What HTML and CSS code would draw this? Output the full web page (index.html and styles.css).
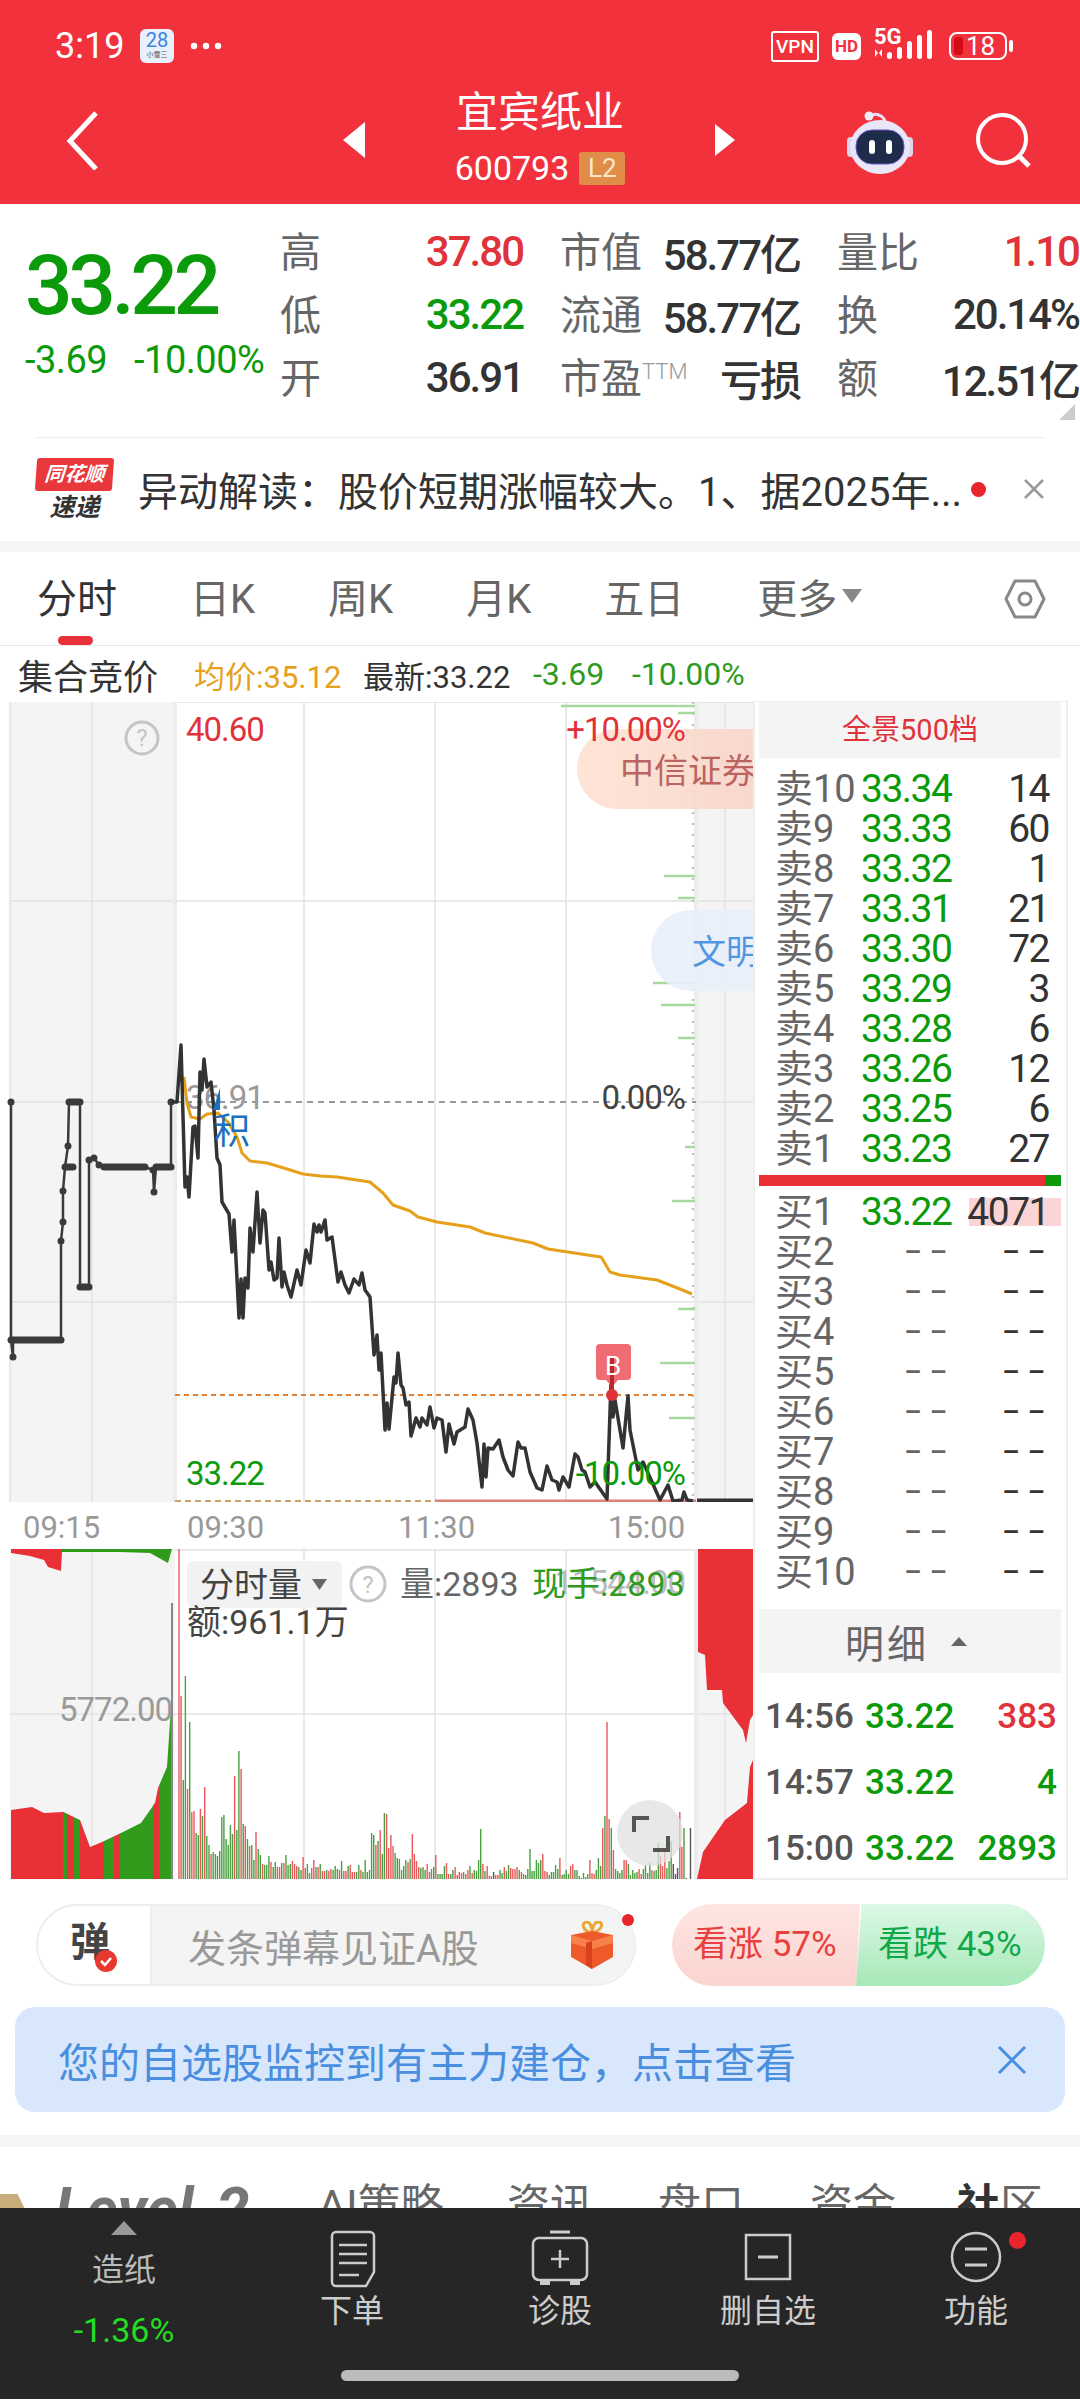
FILE: index.html
```html
<!DOCTYPE html>
<html lang="zh-CN">

<head>
    <meta charset="UTF-8">
    <meta name="viewport" content="width=device-width, initial-scale=1.0">
    <title>宜宾纸业 600793</title>
    <link rel="stylesheet" href="styles.css">
</head>

<body>
    <header class="header">
        <div class="status-bar">
            <span class="status-time">3:19</span>
            <div class="calendar"><span class="calendar-day">28</span><span class="calendar-sub">小雪三</span></div>
            <svg class="status-dots" width="32" height="8" viewBox="0 0 32 8"><circle cx="4" cy="4" r="3.2" /><circle cx="16" cy="4" r="3.2" /><circle cx="28" cy="4" r="3.2" /></svg>
            <div class="status-right">
                <span class="vpn">VPN</span>
                <span class="hd">HD</span>
                <div class="signal">
                    <span class="signal-5g">5G</span>
                    <svg width="60" height="30" viewBox="0 0 60 30" fill="#fff">
                        <path d="M1 19v8l3-4zM8 27v-8l-3 4z" />
                        <rect x="13" y="22" width="5" height="7" rx="2.5" />
                        <rect x="23" y="17" width="5" height="12" rx="2.5" />
                        <rect x="33" y="11" width="5" height="18" rx="2.5" />
                        <rect x="43" y="5" width="5" height="24" rx="2.5" />
                        <rect x="53" y="0" width="5" height="29" rx="2.5" />
                    </svg>
                </div>
                <div class="battery"><i class="battery-low"></i><span>18</span></div>
                <i class="battery-nub"></i>
            </div>
        </div>
        <nav class="nav">
            <svg class="nav-back" width="34" height="60" viewBox="0 0 34 60"><path d="M30 3 4 31l26 28" fill="none" stroke="#fff" stroke-width="5" /></svg>
            <svg class="nav-tri-left" width="22" height="36" viewBox="0 0 22 36"><path d="M22 0v36L0 18z" fill="#fff" /></svg>
            <div class="nav-title">
                <div class="stock-name">宜宾纸业</div>
                <div class="stock-code">600793<span class="badge-l2">L2</span></div>
            </div>
            <svg class="nav-tri-right" width="20" height="32" viewBox="0 0 20 32"><path d="M0 0v32l20-16z" fill="#fff" /></svg>
            <svg class="nav-robot" width="70" height="66" viewBox="0 0 70 66">
                <path d="M25 10c0-5 6-6 11-3 3 2 4 5 4 7" fill="none" stroke="#e6e2f6" stroke-width="3" />
                <circle cx="24" cy="7" r="4.5" fill="#f0edfa" />
                <rect x="2" y="28" width="8" height="20" rx="4" fill="#d9d6ee" />
                <rect x="60" y="28" width="8" height="20" rx="4" fill="#d9d6ee" />
                <ellipse cx="35" cy="38" rx="30" ry="27" fill="#e9e7f7" />
                <rect x="11" y="21" width="48" height="34" rx="16" fill="#1e2b4a" stroke="#6a55c8" stroke-width="1" />
                <rect x="24" y="31" width="6" height="14" rx="3" fill="#fff" />
                <rect x="41" y="31" width="6" height="14" rx="3" fill="#fff" />
            </svg>
            <svg class="nav-search" width="60" height="60" viewBox="0 0 60 60"><circle cx="27" cy="27" r="24" fill="none" stroke="#fff" stroke-width="4" /><path d="m44 44 10 10" stroke="#fff" stroke-width="5" /></svg>
        </nav>
    </header>

    <section class="quote">
        <div class="quote-left">
            <div class="quote-price">33.22</div>
            <div class="quote-change"><span>-3.69</span><span>-10.00%</span></div>
        </div>
        <div class="quote-grid">
            <div class="cell"><span class="cell-label">高</span><span class="red">37.80</span></div>
            <div class="cell"><span class="cell-label">市值</span><span>58.77亿</span></div>
            <div class="cell"><span class="cell-label">量比</span><span class="red">1.10</span></div>
            <div class="cell"><span class="cell-label">低</span><span class="green">33.22</span></div>
            <div class="cell"><span class="cell-label">流通</span><span>58.77亿</span></div>
            <div class="cell"><span class="cell-label">换</span><span>20.14%</span></div>
            <div class="cell"><span class="cell-label">开</span><span>36.91</span></div>
            <div class="cell"><span class="cell-label">市盈<sup class="ttm">TTM</sup></span><span>亏损</span></div>
            <div class="cell"><span class="cell-label">额</span><span>12.51亿</span></div>
        </div>
        <i class="quote-corner"></i>
    </section>

    <section class="news">
        <div class="news-logo">
            <div class="logo-top">同花顺</div>
            <div class="logo-bottom">速递</div>
        </div>
        <div class="news-text">异动解读：股价短期涨幅较大。1、据2025年...</div>
        <i class="news-dot"></i>
        <svg class="news-close" width="22" height="22" viewBox="0 0 22 22"><path d="m2 2 18 18M20 2 2 20" stroke="#999" stroke-width="2.5" /></svg>
    </section>

    <div class="tabs">
        <div class="tab tab-active">分时</div>
        <div class="tab">日K</div>
        <div class="tab">周K</div>
        <div class="tab">月K</div>
        <div class="tab">五日</div>
        <div class="tab">更多<i class="tab-caret"></i></div>
        <svg class="tab-hex" width="42" height="40" viewBox="0 0 42 40"><path d="M11 2h20l9 18-9 18H11L2 20z" fill="none" stroke="#888" stroke-width="3" stroke-linejoin="round" /><circle cx="21" cy="20" r="6" fill="none" stroke="#888" stroke-width="3" /></svg>
    </div>

    <div class="sub-line">
        <span class="sub-title">集合竞价</span>
        <span class="sub-avg">均价:35.12</span>
        <span class="sub-latest">最新:33.22</span>
        <span class="sub-green">-3.69</span>
        <span class="sub-green">-10.00%</span>
    </div>

    <main class="main">
        <div class="chart-col">
            <svg class="chart" width="753" height="800" viewBox="0 702 753 800">
                <defs>
                    <linearGradient id="bubbleRed" x1="0" x2="1" y1="0" y2="0"><stop offset="0" stop-color="#fde3d2" /><stop offset="1" stop-color="#f8d0c8" /></linearGradient>
                </defs>
                <rect class="side-bg" x="10" y="702" width="165" height="800" />
                <rect class="side-bg" x="696" y="702" width="57" height="800" />
                <path class="grid-line" d="M10 901H753M10 1302H753M92 702V1502M304 702V1502M435 702V1502M566 702V1502M725 702V1502M10 702V1502M10 1102H175M696 1102H753M175 702H753" />
                <path class="grid-thick" d="M175 702V1502M696 702V1502" />
                <path class="tick-dots" d="M693 702V1500" />
                <path class="ticks" d="M561 706H695M678 713H695M664 876H695M678 898H695M653 983H695M661 1005H695M678 1038H695M685 1147H695M672 1201H695M678 1309H695M660 1363H695M669 1418H695" />
                <path class="dash-open" d="M175 1102H696" />
                <path class="dash-order" d="M175 1395H696" />
                <path class="dash-low" d="M175 1501H435" />
                <path class="dash-low-red" d="M435 1501H696" />
                <path class="close-bar" d="M697 1501H753" />

                <text class="t-label t-red" x="186" y="741">40.60</text>
                <text class="t-label t-gray" x="186" y="1109">36.91</text>
                <text class="t-label t-dark" x="685" y="1109" text-anchor="end">0.00%</text>
                <text class="t-label t-green" x="186" y="1485">33.22</text>

                <circle class="help-circle" cx="142" cy="738" r="16" />
                <text class="help-mark" x="142" y="746" text-anchor="middle">?</text>

                <path class="pre-line" d="M11 1102V1340L13 1357V1340H61V1241L63 1222V1191L65 1167L68 1146L69 1102H80V1287H89V1160L94 1158L99 1165L104 1167H145L153 1170L154 1192L156 1167H171V1102" />
                <path class="pre-dots" d="M11 1102h0M11 1340h50M13 1357h0M61 1241h0M63 1222h0M63 1191h0M65 1167h8M68 1146h0M69 1102h11M80 1287h9M89 1160h0M94 1158h0M99 1165h0M104 1167h41M153 1170h0M154 1192h0M156 1167h15M171 1102h0" />

                <polyline class="avg-line" points="184,1077 187,1103 191,1117 200,1119 207,1114 218,1113 228,1122 237,1137 242,1153 250,1161 267,1163 287,1169 303,1174 320,1176 337,1177 370,1182 383,1193 393,1205 410,1211 418,1217 437,1222 470,1227 485,1233 533,1243 548,1249 601,1257 603,1260 610,1272 620,1275 657,1280 680,1289 692,1294" />
                <polyline class="price-line" points="172,1102 177,1102 181,1045 185,1187 187,1177 189,1197 193,1127 195,1126 198,1158 200,1072 202,1090 204,1059 207,1087 211,1082 214,1110 217,1158 220,1165 222,1202 229,1214 232,1252 234,1220 239,1318 241,1279 243,1318 245,1278 248,1288 250,1228 253,1252 257,1192 260,1243 263,1210 265,1213 269,1270 271,1262 274,1280 277,1278 279,1238 282,1287 284,1272 287,1285 291,1297 297,1270 301,1285 306,1250 310,1263 314,1224 317,1232 319,1225 321,1232 325,1220 327,1240 332,1237 338,1282 341,1272 345,1285 349,1293 354,1279 359,1285 362,1273 365,1290 370,1297 374,1355 377,1335 379,1370 381,1353 385,1430 387,1403 389,1429 394,1377 396,1383 398,1353 401,1385 403,1388 406,1405 409,1402 411,1436 416,1418 420,1427 422,1418 427,1425 430,1407 434,1428 437,1418 442,1420 446,1452 449,1424 454,1444 457,1432 465,1427 468,1409 473,1420 477,1443 482,1487 484,1444 486,1477 488,1448 493,1449 499,1440 503,1457 508,1470 513,1476 518,1442 521,1448 525,1448 530,1472 537,1488 542,1490 547,1466 552,1480 557,1482 559,1490 563,1477 569,1487 575,1454 578,1457 582,1470 585,1472 590,1487 595,1482 607,1499 611,1383 613,1417 615,1400 623,1448 628,1396 630,1430 638,1470 643,1462 652,1482 660,1500 668,1485 673,1501 682,1500 684,1492 687,1500 693,1501" />

                <text class="t-label t-green" x="685" y="1485" text-anchor="end">-10.00%</text>

                <path class="ji-tri" d="M220 1088V1110H213z" />
                <text class="ji-text" x="214" y="1144">积</text>

                <path class="flag" d="M600 1344H627a4 4 0 0 1 4 4V1376a4 4 0 0 1-4 4H618L612 1387L606 1380H600a4 4 0 0 1-4-4V1348a4 4 0 0 1 4-4z" />
                <path class="flag-stem" d="M612 1358V1395" />
                <circle class="flag-dot" cx="612" cy="1395" r="6" />
                <text class="flag-text" x="613" y="1375" text-anchor="middle">B</text>

                <g class="bubble">
                    <rect x="577" y="729" width="240" height="80" rx="40" fill="url(#bubbleRed)" />
                    <text class="bubble-red" x="620" y="783">中信证券</text>
                </g>
                <g class="bubble">
                    <rect x="651" y="910" width="200" height="81" rx="40" fill="#e9f0fb" />
                    <text class="bubble-blue" x="692" y="964">文明</text>
                </g>
                <text class="t-label t-red" x="685" y="741" text-anchor="end">+10.00%</text>
            </svg>

            <div class="time-axis">
                <span>09:15</span>
                <span>09:30</span>
                <span>11:30</span>
                <span>15:00</span>
            </div>

            <svg class="chart" width="753" height="331" viewBox="0 1549 753 331">
                <defs>
                    <clipPath id="preClip"><path d="M11 1879V1810L32 1807L44 1813L63 1812L80 1820L90 1847L102 1842L121 1833L141 1823L155 1803L158 1788L167 1767L171 1707L172 1683V1879z" /></clipPath>
                    <clipPath id="preTopClip"><path d="M11 1549V1553L30 1556L44 1560L48 1567L61 1571L62 1552L120 1552L150 1553L168 1563L172 1549z" /></clipPath>
                </defs>
                <rect class="side-bg" x="10" y="1549" width="165" height="331" />
                <rect class="side-bg" x="697" y="1549" width="56" height="331" />
                <path class="grid-line" d="M10 1714H753M92 1549V1879M304 1549V1879M435 1549V1879M566 1549V1879M725 1549V1879M175 1550H697" />
                <path class="grid-thick" d="M696 1549V1879" />

                <g clip-path="url(#preClip)">
                    <rect class="area-red" x="10" y="1680" width="60" height="200" />
                    <rect class="area-green" x="63" y="1680" width="4" height="200" />
                    <rect class="area-red" x="67" y="1680" width="6" height="200" />
                    <rect class="area-green" x="73" y="1680" width="7" height="200" />
                    <rect class="area-red" x="80" y="1680" width="24" height="200" />
                    <rect class="area-green" x="104" y="1680" width="10" height="200" />
                    <rect class="area-red" x="114" y="1680" width="6" height="200" />
                    <rect class="area-green" x="120" y="1680" width="35" height="200" />
                    <rect class="area-red" x="153" y="1680" width="6" height="200" />
                    <rect class="area-green" x="159" y="1680" width="14" height="200" />
                </g>
                <g clip-path="url(#preTopClip)">
                    <rect class="area-red" x="10" y="1549" width="52" height="30" />
                    <rect class="area-green" x="62" y="1549" width="112" height="30" />
                </g>
                <polygon class="area-red" points="698,1549 753,1549 753,1715 750,1720 746,1743 743,1730 723,1703 722,1690 707,1690 705,1655 698,1652" />
                <polygon class="area-red" points="697,1879 703,1852 725,1820 747,1803 750,1767 753,1760 753,1879" />

                <path class="vol-mark" d="M172 1603V1879" />
                <path id="volGray" class="vol-gray" />
                <path id="volGreen" class="vol-green" />
                <path id="volRed" class="vol-red" />

                <rect class="vol-select" x="187" y="1561" width="155" height="47" rx="6" />
                <text class="t-vol t-dark" x="200" y="1597">分时量</text>
                <path class="vol-caret" d="M312 1579H327L319.500 1590z" />
                <circle class="help-circle" cx="368" cy="1584" r="17" />
                <text class="help-mark" x="368" y="1593" text-anchor="middle">?</text>
                <text class="t-vol t-mid" x="400" y="1596">量:2893</text>
                <text class="t-label t-pale" x="685" y="1594" text-anchor="end">11544.00</text>
                <text class="t-vol t-vol-green" x="532" y="1596">现手:2893</text>
                <text class="t-vol t-dark" x="187" y="1634">额:961.1万</text>
                <text class="t-label t-gray" x="172" y="1721" text-anchor="end">5772.00</text>

                <circle class="expand-bg" cx="650" cy="1833" r="33" />
                <path class="expand-mark" d="M634 1832V1818H649M653 1850H668V1836" />
            </svg>
        </div>

        <aside class="book">
            <div class="book-head">全景500档</div>
            <div class="book-asks">
                <div class="book-row"><span class="book-label">卖10</span><span class="book-price">33.34</span><span class="book-qty">14</span></div>
                <div class="book-row"><span class="book-label">卖9</span><span class="book-price">33.33</span><span class="book-qty">60</span></div>
                <div class="book-row"><span class="book-label">卖8</span><span class="book-price">33.32</span><span class="book-qty">1</span></div>
                <div class="book-row"><span class="book-label">卖7</span><span class="book-price">33.31</span><span class="book-qty">21</span></div>
                <div class="book-row"><span class="book-label">卖6</span><span class="book-price">33.30</span><span class="book-qty">72</span></div>
                <div class="book-row"><span class="book-label">卖5</span><span class="book-price">33.29</span><span class="book-qty">3</span></div>
                <div class="book-row"><span class="book-label">卖4</span><span class="book-price">33.28</span><span class="book-qty">6</span></div>
                <div class="book-row"><span class="book-label">卖3</span><span class="book-price">33.26</span><span class="book-qty">12</span></div>
                <div class="book-row"><span class="book-label">卖2</span><span class="book-price">33.25</span><span class="book-qty">6</span></div>
                <div class="book-row"><span class="book-label">卖1</span><span class="book-price">33.23</span><span class="book-qty">27</span></div>
            </div>
            <div class="book-bar"><i class="book-bar-green"></i></div>
            <div class="book-bids">
                <div class="book-row book-first"><span class="book-label">买1</span><span class="book-price">33.22</span><span class="book-qty">4071</span></div>
                <div class="book-row"><span class="book-label">买2</span><span class="dash dash-price">––</span><span class="dash dash-qty">––</span></div>
                <div class="book-row"><span class="book-label">买3</span><span class="dash dash-price">––</span><span class="dash dash-qty">––</span></div>
                <div class="book-row"><span class="book-label">买4</span><span class="dash dash-price">––</span><span class="dash dash-qty">––</span></div>
                <div class="book-row"><span class="book-label">买5</span><span class="dash dash-price">––</span><span class="dash dash-qty">––</span></div>
                <div class="book-row"><span class="book-label">买6</span><span class="dash dash-price">––</span><span class="dash dash-qty">––</span></div>
                <div class="book-row"><span class="book-label">买7</span><span class="dash dash-price">––</span><span class="dash dash-qty">––</span></div>
                <div class="book-row"><span class="book-label">买8</span><span class="dash dash-price">––</span><span class="dash dash-qty">––</span></div>
                <div class="book-row"><span class="book-label">买9</span><span class="dash dash-price">––</span><span class="dash dash-qty">––</span></div>
                <div class="book-row"><span class="book-label">买10</span><span class="dash dash-price">––</span><span class="dash dash-qty">––</span></div>
            </div>
            <div class="detail-head">明细<i class="detail-caret"></i></div>
            <div class="detail-list">
                <div class="detail-row"><span class="detail-time">14:56</span><span class="green">33.22</span><span class="red">383</span></div>
                <div class="detail-row"><span class="detail-time">14:57</span><span class="green">33.22</span><span class="green">4</span></div>
                <div class="detail-row"><span class="detail-time">15:00</span><span class="green">33.22</span><span class="green">2893</span></div>
            </div>
        </aside>
    </main>

    <section class="action-row">
        <div class="danmu">
            <div class="danmu-left">
                <span class="danmu-char">弹</span>
                <svg class="danmu-check" width="24" height="24" viewBox="0 0 24 24"><circle cx="12" cy="12" r="11" fill="#e8392f" /><path d="m7 12 4 4 6-7" fill="none" stroke="#fff" stroke-width="2.500" /></svg>
            </div>
            <div class="danmu-input">
                <span>发条弹幕见证A股</span>
                <svg class="danmu-gift" width="44" height="48" viewBox="0 0 44 48">
                    <path d="M21 12c-8-2-10-10-5-11 4-1 6 5 6 11 0-6 3-12 7-11 5 1 3 9-8 11z" fill="none" stroke="#e9a83a" stroke-width="3" />
                    <path d="M1 14 22 10l21 4v22L22 48 1 36z" fill="#ee5a2a" />
                    <path d="M1 14 22 20l21-6v8L22 28 1 22z" fill="#f8804a" />
                    <path d="M22 20v28l-6-4V22z" fill="#d9401f" />
                </svg>
            </div>
            <i class="danmu-dot"></i>
        </div>
        <div class="vote">
            <div class="vote-up">看涨 57%</div>
            <div class="vote-down">看跌 43%</div>
        </div>
    </section>

    <section class="notice">
        <span>您的自选股监控到有主力建仓，点击查看</span>
        <svg width="30" height="30" viewBox="0 0 30 30"><path d="m2 2 26 26M28 2 2 28" stroke="#4a8ee0" stroke-width="3" /></svg>
    </section>

    <div class="gap-bar"></div>

    <div class="section-tabs">
        <i class="level-tag"></i>
        <span class="section-level">Level-2</span>
        <span class="section-ai">AI策略</span>
        <span class="section-news">资讯</span>
        <span class="section-pan">盘口</span>
        <span class="section-fund">资金</span>
        <span class="section-social"><b>社</b>区</span>
    </div>

    <footer class="bottom-bar">
        <div class="bottom-items">
            <div class="bottom-index">
                <i class="index-arrow"></i>
                <span class="index-name">造纸</span>
                <span class="index-value">-1.36%</span>
            </div>
            <div class="bottom-item">
                <svg width="60" height="58" viewBox="0 0 60 58" fill="none" stroke="#ccc" stroke-width="2.500">
                    <path d="M14 2H48a4 4 0 0 1 4 4V42L44 56H14a4 4 0 0 1-4-4V6a4 4 0 0 1 4-4z" />
                    <path d="M17 15H45M17 24H45M17 33H45M17 45H37" />
                </svg>
                <span>下单</span>
            </div>
            <div class="bottom-item">
                <svg width="60" height="58" viewBox="0 0 60 58" fill="none" stroke="#ccc" stroke-width="2.500">
                    <path d="M20 2H40" stroke-width="3" />
                    <rect x="3" y="8" width="54" height="42" rx="6" />
                    <path d="M30 20V38M21 29H39" />
                    <path d="M10 53H20M40 53H50" stroke-width="4" />
                </svg>
                <span>诊股</span>
            </div>
            <div class="bottom-item">
                <svg width="60" height="58" viewBox="0 0 60 58" fill="none" stroke="#ccc" stroke-width="2.500">
                    <rect x="8" y="5" width="44" height="44" />
                    <path d="M20 27H40" stroke-width="3" />
                </svg>
                <span>删自选</span>
            </div>
            <div class="bottom-item">
                <svg width="60" height="58" viewBox="0 0 60 58" fill="none" stroke="#ccc" stroke-width="2.500">
                    <circle cx="30" cy="27" r="24" />
                    <path d="M19 19H41M19 35H41" stroke-width="3" />
                </svg>
                <i class="bottom-dot"></i>
                <span>功能</span>
            </div>
        </div>
        <div class="home-handle"></div>
    </footer>

    <script src="script.js"></script>
</body>

</html>
```

FILE: styles.css
```css
* {
    box-sizing: border-box;
}

body {
    margin: 0;
    width: 1080px;
    height: 2400px;
    overflow: hidden;
    background-color: #fff;
    color: #333;
    font-family: Roboto, "Noto Sans CJK SC", sans-serif;
}

i {
    display: block;
}

.red {
    color: #e0323a;
}

.green {
    color: #0a9a0a;
}

/* header */
.header {
    height: 204px;
    background-color: #f1323c;
    color: #fff;
}

.status-bar {
    display: flex;
    align-items: center;
    height: 80px;
    padding: 12px 0 0 55px;
}

.status-time {
    font-size: 36px;
    width: 85px;
}

.calendar {
    display: flex;
    flex-direction: column;
    align-items: center;
    width: 34px;
    height: 34px;
    border-radius: 6px;
    background-color: #e8f1fb;
    overflow: hidden;
}

.calendar-day {
    font-size: 20px;
    line-height: 22px;
    color: #3a84dc;
}

.calendar-sub {
    font-size: 7px;
    line-height: 8px;
    color: #555;
}

.status-dots {
    margin-left: 16px;
    fill: #fff;
}

.status-right {
    display: flex;
    align-items: center;
    margin-left: auto;
    padding-right: 67px;
}

.vpn {
    width: 48px;
    height: 31px;
    border: 2px solid #fff;
    border-radius: 3px;
    font-size: 19px;
    font-weight: 500;
    line-height: 27px;
    text-align: center;
}

.hd {
    width: 29px;
    height: 27px;
    margin-left: 13px;
    border-radius: 6px;
    background-color: #fff;
    color: #f1323c;
    font-size: 17px;
    font-weight: 700;
    line-height: 27px;
    text-align: center;
}

.signal {
    position: relative;
    margin-left: 13px;
    width: 60px;
    height: 32px;
}

.signal-5g {
    position: absolute;
    left: 0;
    top: -3px;
    font-size: 22px;
    font-weight: 700;
    line-height: 20px;
}

.signal svg {
    display: block;
}

.battery {
    display: flex;
    align-items: center;
    width: 58px;
    height: 28px;
    margin-left: 15px;
    padding: 3px;
    border: 2px solid #fff;
    border-radius: 8px;
    font-size: 26px;
    line-height: 22px;
}

.battery-low {
    width: 9px;
    height: 18px;
    margin-right: 3px;
    border-radius: 3px;
    background-color: #d40b14;
}

.battery-nub {
    width: 4px;
    height: 12px;
    margin-left: 2px;
    border-radius: 2px;
    background-color: #fff;
}

.nav {
    display: flex;
    align-items: center;
    height: 124px;
    padding-left: 66px;
}

.nav-back {
    margin: -4px 243px 0 0;
}

.nav-tri-left,
.nav-tri-right {
    margin-top: -4px;
}

.nav-title {
    width: 350px;
    text-align: center;
}

.stock-name {
    font-size: 42px;
    line-height: 52px;
    margin-top: -12px;
}

.stock-code {
    display: flex;
    justify-content: center;
    align-items: center;
    font-size: 34px;
    line-height: 34px;
    margin-top: 12px;
}

.badge-l2 {
    width: 46px;
    height: 33px;
    margin-left: 10px;
    border-radius: 3px;
    background-color: #e08d4a;
    color: #f9e7c9;
    font-size: 26px;
    line-height: 33px;
}

.nav-robot {
    margin-left: 110px;
}

.nav-search {
    margin: 0 0 0 60px;
}

/* quote */
.quote {
    position: relative;
    display: flex;
    height: 233px;
}

.quote-left {
    width: 280px;
    padding: 42px 0 0 25px;
}

.quote-price {
    font-size: 84px;
    font-weight: 500;
    letter-spacing: -4.5px;
    line-height: 80px;
    color: #0a9a0a;
}

.quote-change {
    display: flex;
    gap: 27px;
    margin-top: 14px;
    font-size: 38px;
    letter-spacing: -0.5px;
    line-height: 40px;
    color: #0a9a0a;
}

.quote-grid {
    display: grid;
    grid-template-columns: 243px 240px 242px;
    grid-auto-rows: 63px;
    column-gap: 37px;
    padding-top: 16px;
    white-space: nowrap;
}

.cell {
    display: flex;
    justify-content: space-between;
    align-items: center;
    font-size: 42px;
    font-weight: 500;
    letter-spacing: -2px;
    color: #333;
}

.cell .red {
    color: #e0323a;
}

.cell .green {
    color: #0a9a0a;
}

.cell-label {
    margin-bottom: 6px;
    font-size: 41px;
    font-weight: 400;
    letter-spacing: 0;
    color: #666;
}

.ttm {
    font-size: 22px;
    font-weight: 300;
    color: #999;
    vertical-align: 14px;
    line-height: 0;
}

.quote-corner {
    position: absolute;
    right: 5px;
    bottom: 17px;
    width: 0;
    height: 0;
    border-left: 16px solid transparent;
    border-bottom: 16px solid #ccc;
}

/* news */
.news {
    position: relative;
    display: flex;
    align-items: center;
    height: 115px;
    padding: 0 0 0 36px;
    border-bottom: 11px solid #f5f5f5;
}

.news::before {
    content: "";
    position: absolute;
    left: 35px;
    right: 35px;
    top: 0;
    border-top: 1px solid #eee;
}

.news-logo {
    width: 77px;
    margin-right: 25px;
    text-align: center;
    font-style: italic;
    font-weight: 700;
}

.logo-top {
    height: 33px;
    border-radius: 3px;
    background-color: #e8383c;
    color: #fff;
    font-size: 20px;
    line-height: 33px;
    transform: skewX(-4deg);
}

.logo-bottom {
    margin-top: 4px;
    font-size: 25px;
    line-height: 26px;
    color: #333;
}

.news-text {
    width: 825px;
    font-size: 40px;
    white-space: nowrap;
    color: #333;
}

.news-dot {
    width: 15px;
    height: 15px;
    margin-left: 8px;
    border-radius: 50%;
    background-color: #e8252c;
}

.news-close {
    margin-left: 37px;
}

/* tabs */
.tabs {
    display: flex;
    align-items: center;
    gap: 73px;
    height: 94px;
    padding-left: 37px;
    border-bottom: 1px solid #e6e6e6;
    font-size: 40px;
    color: #666;
}

.tab {
    position: relative;
    display: flex;
    align-items: center;
    height: 93px;
    padding-bottom: 6px;
}

.tab-active {
    color: #333;
}

.tab-active::after {
    content: "";
    position: absolute;
    left: 21px;
    bottom: 0;
    width: 35px;
    height: 9px;
    border-radius: 5px;
    background-color: #e8303a;
}

.tab-caret {
    width: 0;
    height: 0;
    margin-left: 5px;
    border-left: 10px solid transparent;
    border-right: 10px solid transparent;
    border-top: 14px solid #888;
}

.tab-hex {
    margin-left: 69px;
}

.sub-line {
    display: flex;
    align-items: center;
    height: 56px;
    padding-left: 18px;
    font-size: 31px;
    white-space: nowrap;
}

.sub-title {
    width: 176px;
    font-size: 35px;
}

.sub-avg {
    width: 169px;
    color: #e5a11c;
}

.sub-latest {
    width: 170px;
}

.sub-green {
    width: 99px;
    font-size: 32px;
    color: #2e9a1f;
}

/* main chart + order book */
.main {
    display: flex;
    height: 1178px;
}

.chart-col {
    width: 753px;
}

.chart {
    display: block;
    font-family: Roboto, "Noto Sans CJK SC", sans-serif;
}

.side-bg {
    fill: #f4f4f4;
}

.grid-line {
    fill: none;
    stroke: #e2e2e2;
    stroke-width: 1.500;
}

.grid-thick {
    fill: none;
    stroke: #ececec;
    stroke-width: 4;
}

.ticks {
    fill: none;
    stroke: #a6d8a0;
    stroke-width: 2.500;
}

.tick-dots {
    fill: none;
    stroke: #a6d8a0;
    stroke-width: 2.500;
    stroke-dasharray: 2 9;
}

.dash-open {
    fill: none;
    stroke: #999;
    stroke-width: 2;
    stroke-dasharray: 6 5;
}

.dash-order {
    fill: none;
    stroke: #e8802e;
    stroke-width: 2;
    stroke-dasharray: 5 4;
}

.dash-low {
    fill: none;
    stroke: #c9a06a;
    stroke-width: 2;
    stroke-dasharray: 6 4;
}

.dash-low-red {
    fill: none;
    stroke: #e0807a;
    stroke-width: 3;
}

.close-bar {
    fill: none;
    stroke: #333;
    stroke-width: 5;
}

.t-label {
    font-size: 33px;
    letter-spacing: -1px;
}

.t-red {
    fill: #e0323a;
}

.t-green {
    fill: #0a9a0a;
}

.t-gray {
    fill: #9a9a9a;
}

.t-dark {
    fill: #444;
}

.t-mid {
    fill: #666;
}

.t-pale {
    fill: #bbb;
}

.help-circle {
    fill: none;
    stroke: #c4c4c4;
    stroke-width: 3;
}

.help-mark {
    fill: #c4c4c4;
    font-size: 24px;
}

.pre-line {
    fill: none;
    stroke: #3a3a3a;
    stroke-width: 2.500;
}

.pre-dots {
    fill: none;
    stroke: #3a3a3a;
    stroke-width: 7;
    stroke-linecap: round;
}

.avg-line {
    fill: none;
    stroke: #e5a11c;
    stroke-width: 3;
    stroke-linejoin: round;
}

.price-line {
    fill: none;
    stroke: #333;
    stroke-width: 3.500;
    stroke-linejoin: round;
}

.ji-tri {
    fill: #1a6fc0;
}

.ji-text {
    fill: #1a6fc0;
    font-size: 36px;
}

.flag {
    fill: #ef6d72;
}

.flag-stem {
    stroke: #b8282c;
    stroke-width: 4;
}

.flag-dot {
    fill: #e0323a;
}

.flag-text {
    fill: #fff;
    font-size: 26px;
}

.bubble {
    opacity: 0.9;
}

.bubble-red {
    fill: #b4544f;
    font-size: 34px;
}

.bubble-blue {
    fill: #3f8ce0;
    font-size: 34px;
}

.time-axis {
    display: flex;
    gap: 0;
    height: 47px;
    padding: 4px 0 0 23px;
    font-size: 31px;
    line-height: 43px;
    color: #999;
}

.time-axis span {
    width: 77px;
    margin-right: 87px;
}

.time-axis span:nth-child(2) {
    margin-right: 134px;
}

.time-axis span:nth-child(3) {
    margin-right: 133px;
}

.area-red {
    fill: #e83036;
}

.area-green {
    fill: #319b1b;
}

.vol-mark {
    stroke: #888;
    stroke-width: 2;
}

.vol-red {
    fill: none;
    stroke: #e8585c;
    stroke-width: 1.400;
}

.vol-green {
    fill: none;
    stroke: #4a9f40;
    stroke-width: 1.400;
}

.vol-gray {
    fill: none;
    stroke: #555;
    stroke-width: 1.400;
}

.vol-select {
    fill: #f2f2f2;
}

.t-vol {
    font-size: 34px;
}

.t-vol-green {
    fill: #2e9a1f;
}

.vol-caret {
    fill: #666;
}

.expand-bg {
    fill: #e0e0e0;
    opacity: 0.75;
}

.expand-mark {
    fill: none;
    stroke: #555;
    stroke-width: 4;
}

.book {
    width: 315px;
    height: 1179px;
    margin-top: -1px;
    padding: 0 5px 0 4px;
    border-left: 2px solid #eee;
    border-top: 1px solid #eee;
    border-right: 2px solid #eee;
    border-bottom: 2px solid #eee;
}

.book-head {
    height: 56px;
    background-color: #f4f4f4;
    color: #e0323a;
    font-size: 29px;
    line-height: 56px;
    text-align: center;
}

.book-asks {
    margin-top: 11px;
}

.book-row {
    position: relative;
    display: grid;
    grid-template-columns: 86px 90px 1fr;
    align-items: center;
    height: 40px;
    padding: 0 12px 0 16px;
    font-size: 39px;
    letter-spacing: -1.5px;
    line-height: 40px;
    white-space: nowrap;
}

.book-label {
    color: #666;
    font-size: 38px;
    letter-spacing: 0;
}

.book-price {
    color: #0a9a0a;
}

.book-qty {
    position: relative;
    color: #333;
    text-align: right;
}

.book-bar {
    display: flex;
    justify-content: flex-end;
    height: 11px;
    margin-top: 6px;
    background-color: #e83036;
}

.book-bar-green {
    width: 16px;
    background-color: #0a9a0a;
}

.book-bids {
    margin-top: 6px;
}

.book-first::before {
    content: "";
    position: absolute;
    left: 210px;
    right: 0;
    top: 6px;
    height: 28px;
    background-color: #fbd5d5;
}

.dash {
    margin-right: -4px;
    font-size: 27px;
    font-weight: 500;
    letter-spacing: 8px;
    text-align: right;
}

.dash-price {
    color: #666;
}

.dash-qty {
    color: #333;
}

.detail-head {
    display: flex;
    justify-content: center;
    align-items: center;
    height: 64px;
    margin-top: 17px;
    padding-right: 8px;
    background-color: #f4f4f4;
    color: #666;
    font-size: 39px;
    letter-spacing: 3px;
}

.detail-caret {
    width: 0;
    height: 0;
    margin-left: 22px;
    border-left: 8px solid transparent;
    border-right: 8px solid transparent;
    border-bottom: 9px solid #666;
}

.detail-list {
    margin-top: 10px;
}

.detail-row {
    display: grid;
    grid-template-columns: 100px 90px 1fr;
    align-items: center;
    height: 66px;
    padding: 0 4px 0 6px;
    font-size: 35px;
    font-weight: 500;
}

.detail-time {
    color: #555;
}

.detail-row span:last-child {
    text-align: right;
}

/* danmu + vote */
.action-row {
    display: flex;
    height: 82px;
    margin-top: 24px;
    padding-left: 36px;
}

.danmu {
    position: relative;
    display: flex;
    width: 600px;
    border: 2px solid #eee;
    border-radius: 41px;
}

.danmu-left {
    position: relative;
    width: 114px;
    border-right: 2px solid #eee;
    padding-left: 32px;
    font-size: 40px;
    font-weight: 700;
    line-height: 74px;
    color: #444;
}

.danmu-check {
    position: absolute;
    left: 56px;
    top: 43px;
}

.danmu-input {
    display: flex;
    justify-content: space-between;
    align-items: center;
    flex: 1;
    padding: 0 20px 0 36px;
    border-radius: 0 39px 39px 0;
    background-color: #f4f4f4;
    color: #999;
    font-size: 38px;
}

.danmu-dot {
    position: absolute;
    right: 0;
    top: 8px;
    width: 12px;
    height: 12px;
    border-radius: 50%;
    background-color: #e8252c;
}

.vote {
    display: flex;
    width: 373px;
    margin-left: 36px;
    font-size: 35px;
    line-height: 82px;
    white-space: nowrap;
}

.vote-up {
    width: 188px;
    padding-left: 21px;
    border-radius: 41px 0 0 41px;
    background: linear-gradient(#fde6e2, #fbd3cf);
    color: #e84040;
    clip-path: polygon(0 0, 100% 0, 98% 100%, 0 100%);
}

.vote-down {
    width: 189px;
    margin-left: -4px;
    padding-left: 22px;
    border-radius: 0 41px 41px 0;
    background: linear-gradient(#dcf8e6, #a6e8b8);
    color: #10a84a;
    clip-path: polygon(3% 0, 100% 0, 100% 100%, 0 100%);
}

.notice {
    display: flex;
    justify-content: space-between;
    align-items: center;
    height: 105px;
    margin: 21px 15px 0;
    padding: 0 38px 0 43px;
    border-radius: 20px;
    background-color: #d8e7fb;
    color: #4a8ee0;
    font-size: 41px;
}

.gap-bar {
    height: 12px;
    margin-top: 23px;
    background-color: #f5f5f5;
}

.section-tabs {
    position: relative;
    display: flex;
    height: 61px;
    overflow: hidden;
    font-size: 43px;
    line-height: 116px;
    color: #666;
    white-space: nowrap;
}

.section-tabs span {
    display: block;
}

.level-tag {
    width: 25px;
    height: 30px;
    margin-top: 47px;
    background-color: #c9ac7c;
    clip-path: polygon(0 0, 70% 0, 100% 50%, 70% 100%, 0 100%);
}

.section-level {
    margin-left: 30px;
    width: 263px;
    font-size: 60px;
    font-style: italic;
    font-weight: 700;
    line-height: 126px;
    color: #777;
}

.section-ai {
    width: 189px;
}

.section-news {
    width: 151px;
}

.section-pan {
    width: 152px;
}

.section-fund {
    width: 147px;
}

.section-social b {
    color: #333;
}

/* bottom bar */
.bottom-bar {
    height: 191px;
    background-color: #262626;
    color: #ccc;
}

.bottom-items {
    display: grid;
    grid-template-columns: 248px repeat(4, 208px);
    height: 162px;
}

.bottom-index {
    display: flex;
    flex-direction: column;
    align-items: center;
    padding-top: 13px;
}

.index-arrow {
    width: 0;
    height: 0;
    border-left: 13px solid transparent;
    border-right: 13px solid transparent;
    border-bottom: 14px solid #999;
}

.index-name {
    margin-top: 13px;
    font-size: 32px;
    line-height: 44px;
    color: #bbb;
}

.index-value {
    margin-top: 16px;
    font-size: 34px;
    line-height: 44px;
    color: #22dd22;
}

.bottom-item {
    position: relative;
    display: flex;
    flex-direction: column;
    align-items: center;
    padding-top: 22px;
    font-size: 32px;
    line-height: 46px;
}

.bottom-dot {
    position: absolute;
    left: 137px;
    top: 24px;
    width: 17px;
    height: 17px;
    border-radius: 50%;
    background-color: #e8252c;
}

.home-handle {
    width: 398px;
    height: 11px;
    margin: 0 auto;
    border-radius: 6px;
    background-color: #bbb;
}
```

FILE: script.js
```js
// 分时量柱子: r/g/k + 高度, 从09:30开始
const volumeBars = 'r330 r183 g99 g203 r90 g157 r67 r68 g46 g44 r70 g63 r92 g43 g34 r25 g27 g25 g23 g28 g62 g64 g40 g34 g54 g45 r103 g49 g128 r110 g55 r53 g40 r33 g34 g19 r47 g30 g24 r15 g14 g14 g23 r17 g12 g17 r12 r12 g16 r16 g24 g14 g15 r18 r15 r13 g12 g9 r22 r11 g15 g6 r11 r19 g12 r12 g15 r8 r8 g9 r8 r10 g9 g13 g10 r9 g18 r8 r8 g13 r14 r7 r7 g7 g14 r9 g7 g19 g7 g9 g46 g44 r34 g38 r49 g25 g66 r65 r31 r44 r33 g26 g21 g20 g9 g13 g19 r17 g20 r45 r25 r18 r12 g11 g12 g9 r15 r7 g10 g12 r24 g5 g5 g5 g13 r16 r5 g5 g9 r12 r4 r7 r6 g7 r5 r9 ' +
    'g13 r6 g9 g8 g19 g50 r15 g8 r13 r3 r3 k7 r4 r4 g9 g6 r12 g8 g14 r11 r10 r10 r12 g9 r7 g5 g4 g10 g30 g8 g8 g19 g16 g19 r25 r8 r7 g4 g7 g7 g14 g10 r21 g4 g5 g9 g5 r13 r15 g9 g9 g3 g1 g6 g2 g5 r19 r6 r5 g9 g21 g13 r51 g63 r157 r60 g51 r29 g10 g8 g6 g9 r19 r19 g15 g4 g9 g6 g7 r10 r5 g10 g14 g6 g16 r9 g8 g9 g36 r23 r13 r28 g11 g18 g38 k15 k5 k11 r67 r32 g51 k1 k0 k51';

const paths = { r: '', g: '', k: '' };

volumeBars.split(' ').forEach((bar, i) => {
    const x = (179 + i * 2.14).toFixed(1);
    const height = Number(bar.slice(1));
    paths[bar[0]] += `M${x} 1879V${1879 - height}`;
});

document.getElementById('volRed').setAttribute('d', paths.r);
document.getElementById('volGreen').setAttribute('d', paths.g);
document.getElementById('volGray').setAttribute('d', paths.k);
```
